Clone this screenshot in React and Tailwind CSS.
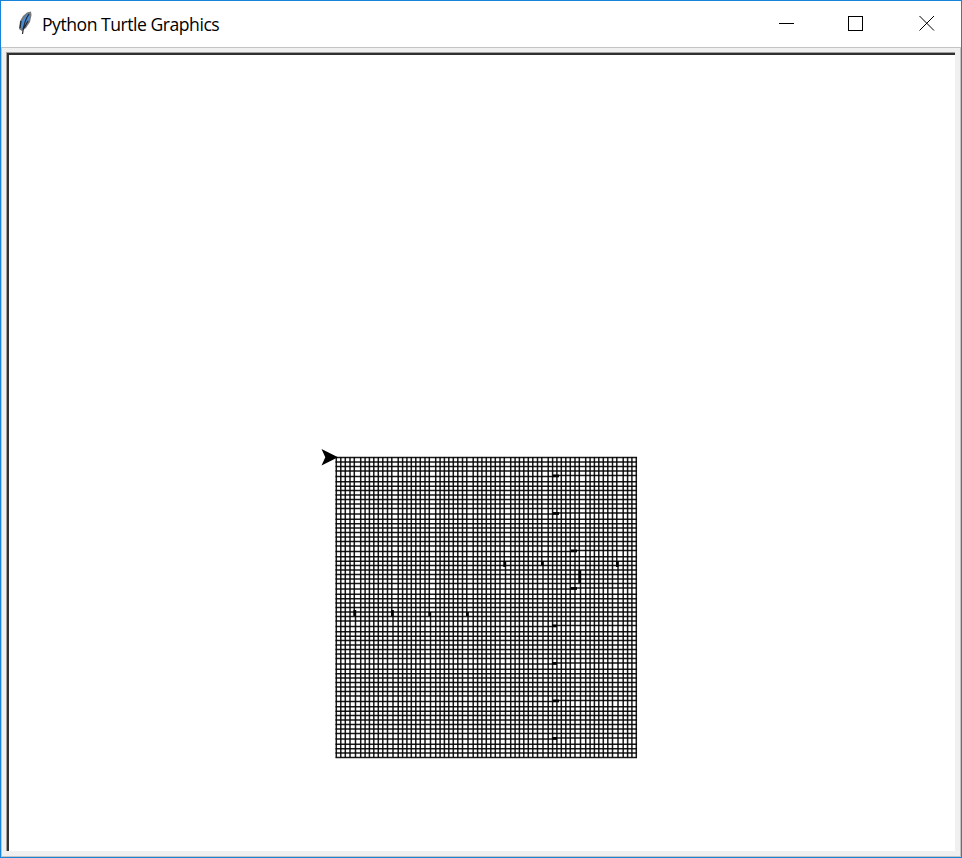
import React from 'react';

const offsets = [0, 4.5, 9, 13.7, 18, 24.4, 28.8, 33.1];
const lines = [];
for (let i = 0; i <= 64; i++) lines.push(Math.floor(i / 8) * 37.5 + offsets[i % 8]);

// Each entry is the start and length of the overlap where a stroke steps by one pixel.
const rowMarks = [[553, 6], [553, 6], [571, 6], [571, 6], [552, 5], [552, 5], [553, 6], [552, 5]];
const columnMarks = [[610, 6], [610, 6], [612, 4], [612, 4], [561, 6], [561, 4], [570, 13], [561, 6]];

function rowPath(v, i) {
  const y = 457.4 + v;
  if (i % 8 !== 4) return `M335.5 ${y}H637`;
  const [x, w] = rowMarks[(i - 4) / 8];
  return `M335.5 ${y + 1.2}H${x + w}M${x} ${y}H637`;
}

function columnPath(v, i) {
  const x = 336.3 + v;
  if (i % 8 !== 4) return `M${x} 457V757.5`;
  const [y, h] = columnMarks[(i - 4) / 8];
  return `M${x} 457V${y + h}M${x + 1.2} ${y}V757.5`;
}

function Drawing() {
  return (
    <svg className="block h-full w-full" viewBox="9 55 946 796">
      <g stroke="#000" strokeWidth="1.5" strokeOpacity="0.9" fill="none">
        {lines.map((v, i) => <path key={'v' + i} d={columnPath(v, i)} />)}
        {lines.map((v, i) => <path key={'h' + i} d={rowPath(v, i)} />)}
      </g>
      {rowMarks.map(([x, w], k) => <rect key={'r' + k} x={x} y={457.4 + k * 37.5 + 17.2} width={w} height="2.5" />)}
      {columnMarks.map(([y, h], k) => <rect key={'c' + k} x={336.3 + k * 37.5 + 17.2} y={y} width="2.5" height={h} />)}
      <path d="M321.5 449L338 457.3L321.5 465.5L325.3 457.3Z" />
    </svg>
  );
}

export default function App() {
  return (
    <div className="flex h-[858px] w-[962px] flex-col border border-[#1883d7] bg-[#f0f0f0]">
      <header className="flex h-[46px] shrink-0 items-center bg-white">
        <svg className="ml-[16px] h-[26px] w-[16px]" viewBox="0 0 16 26">
          <path d="M14 0.5L10 1.5L6 5L3 10L2 18L5 20L9 17L13 11L14.5 4Z" fill="#777" />
          <path d="M12.5 2L9 4L5 10L3.5 17L6 18L10 13L12.5 7Z" fill="#4b8bd1" />
          <path d="M12 3Q7 10 5.5 23M4 10L3 17M11 10L7 17" stroke="#202830" strokeWidth="1.2" fill="none" />
        </svg>
        <h1 className="ml-[9px] w-[178px] whitespace-nowrap font-['Open_Sans',sans-serif] text-[17.6px] leading-6 tracking-[-0.48px] text-black">Python Turtle Graphics</h1>
        <svg className="relative -top-px ml-auto mr-[26px] h-[16px] w-[156px]" viewBox="0 0 156 16" fill="none" stroke="#000" shapeRendering="crispEdges">
          <path d="M0 8.5H15M69.5 1.5H83.5V15.5H69.5Z" />
          <path d="M140.5 1L155 15.5M155 1L140.5 15.5" shapeRendering="auto" />
        </svg>
      </header>
      <main className="flex min-h-0 flex-1 border border-[#c4c4c4] pb-[5px] pl-[4px] pr-[5px] pt-[4px]">
        <div className="flex-1 border-l border-t border-[#a0a0a0]">
          <div className="h-full border-l-2 border-t-2 border-[#303030] bg-white"><Drawing /></div>
        </div>
      </main>
    </div>
  );
}
